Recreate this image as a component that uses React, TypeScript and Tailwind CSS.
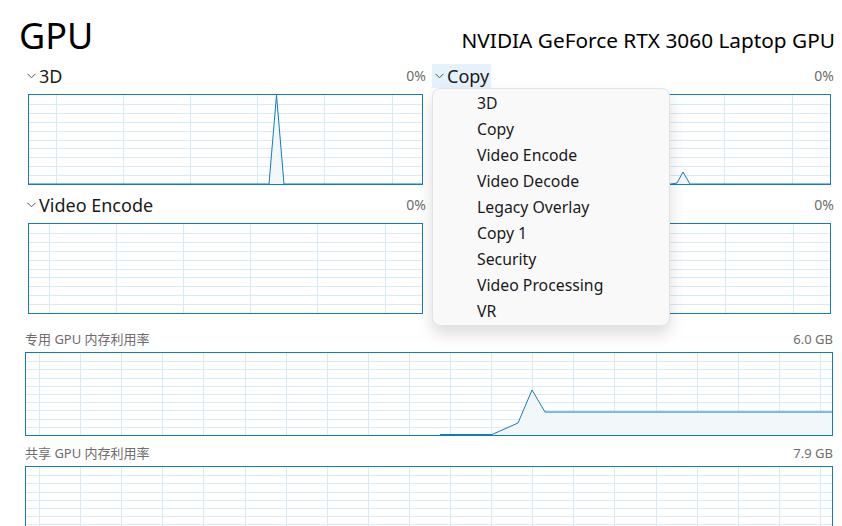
import React from "react";

const FONT = "font-['Noto_Sans','Noto_Sans_CJK_SC',sans-serif]";

type ChartProps = {
  w: number;
  h: number;
  offX: number;
  stepX: number;
  rows: number;
  line?: [number, number][];
};

const Grid = ({ w, h, offX, stepX, rows, line }: ChartProps) => {
  const xs: number[] = [];
  for (let x = offX; x < w; x += stepX) xs.push(Math.round(x) + 0.5);
  const ys: number[] = [];
  for (let i = 1; i < rows; i++) ys.push(Math.round((h * i) / rows) + 0.5);
  const pts = line ? line.map((p) => p.join(",")).join(" ") : "";
  const area = line
    ? `${line[0][0]},${h} ${pts} ${line[line.length - 1][0]},${h}`
    : "";
  return (
    <svg width={w} height={h} className="block">
      {ys.map((y) => (
        <line key={"y" + y} x1={0} x2={w} y1={y} y2={y} stroke="#d9eaf7" strokeWidth={1} />
      ))}
      {xs.map((x) => (
        <line key={"x" + x} x1={x} x2={x} y1={0} y2={h} stroke="#d9eaf7" strokeWidth={1} />
      ))}
      {line && (
        <>
          <polygon points={area} fill="#f1f6fa" fillOpacity={0.9} />
          <polyline points={pts} fill="none" stroke="#117dbb" strokeWidth={1} />
        </>
      )}
    </svg>
  );
};

const Chevron = () => (
  <svg width="9" height="6" viewBox="0 0 9 6" className="shrink-0">
    <path d="M0.5 0.8 L4.5 4.8 L8.5 0.8" fill="none" stroke="#555" strokeWidth="1" />
  </svg>
);

const Engine = ({
  name,
  offX,
  line,
  selected,
}: {
  name: string;
  offX: number;
  line?: [number, number][];
  selected?: boolean;
}) => (
  <div className="w-[402px]">
    <div className="flex items-center justify-between h-[24px]">
      <div
        className={
          "flex items-center gap-[3px] h-[24px] pl-[3px] pr-[2px] " +
          (selected ? "bg-[#e5f1fb]" : "")
        }
      >
        <Chevron />
        <span className="text-[18px] leading-none text-[#1a1a1a]">{name}</span>
      </div>
      <span className="text-[14px] text-[#6d6d6d] leading-none">0%</span>
    </div>
    <div className="mt-[6px] ml-[4px] w-[395px] h-[91px] border border-[#117dbb]">
      <Grid w={393} h={89} offX={offX} stepX={67.2} rows={10} line={line} />
    </div>
  </div>
);

const menu = [
  "3D",
  "Copy",
  "Video Encode",
  "Video Decode",
  "Legacy Overlay",
  "Copy 1",
  "Security",
  "Video Processing",
  "VR",
];

export default function App() {
  return (
    <div className={"w-[842px] h-[526px] overflow-hidden bg-white relative " + FONT}>
      <div className="flex items-end justify-between pl-[19px] pr-[7px] pt-[10px] h-[54px]">
        <span className="text-[36px] leading-none text-black">GPU</span>
        <span className="text-[20.8px] leading-none text-black pb-[3px]">
          NVIDIA GeForce RTX 3060 Laptop GPU
        </span>
      </div>

      <div className="grid grid-cols-[402px_402px] gap-x-[6px] gap-y-[8px] pl-[24px] mt-[10px]">
        <Engine
          name="3D"
          offX={26.5}
          line={[
            [0, 89],
            [240, 89],
            [247.5, 0],
            [255, 89],
            [393, 89],
          ]}
        />
        <div className="relative">
          <Engine
            name="Copy"
            offX={18.5}
            selected
            line={[
              [0, 89],
              [234, 89],
              [240, 88],
              [246, 77],
              [253, 89],
              [393, 89],
            ]}
          />
          <div className="absolute left-0 top-[24px] w-[238px] h-[238px] rounded-[8px] bg-[#f9f9f9] border border-[#e3e3e3] shadow-[0_8px_16px_rgba(0,0,0,0.14)] pt-[2px] z-10">
            {menu.map((m) => (
              <div key={m} className="h-[26px] flex items-center pl-[44px] text-[15.8px] text-[#1a1a1a]">
                {m}
              </div>
            ))}
          </div>
        </div>
        <Engine name="Video Encode" offX={19.5} />
        <Engine name="Video Decode" offX={19.5} />
      </div>

      <div className="pl-[25px] pr-[9px] mt-[16px]">
        <div className="flex justify-between items-center h-[20px] text-[13px] text-[#6d6d6d]">
          <span>专用 GPU 内存利用率</span>
          <span>6.0 GB</span>
        </div>
        <div className="mt-[2px] w-[808px] h-[84px] border border-[#117dbb]">
          <Grid
            w={806}
            h={82}
            offX={13}
            stepX={41.1}
            rows={10}
            line={[
              [414, 81.5],
              [466, 81.5],
              [492, 70],
              [506, 37],
              [519, 59],
              [806, 59],
            ]}
          />
        </div>
        <div className="mt-[8px] flex justify-between items-center h-[20px] text-[13px] text-[#6d6d6d]">
          <span>共享 GPU 内存利用率</span>
          <span>7.9 GB</span>
        </div>
        <div className="mt-[2px] w-[808px] h-[84px] border border-[#117dbb]">
          <Grid w={806} h={82} offX={13} stepX={41.1} rows={10} />
        </div>
      </div>
    </div>
  );
}
